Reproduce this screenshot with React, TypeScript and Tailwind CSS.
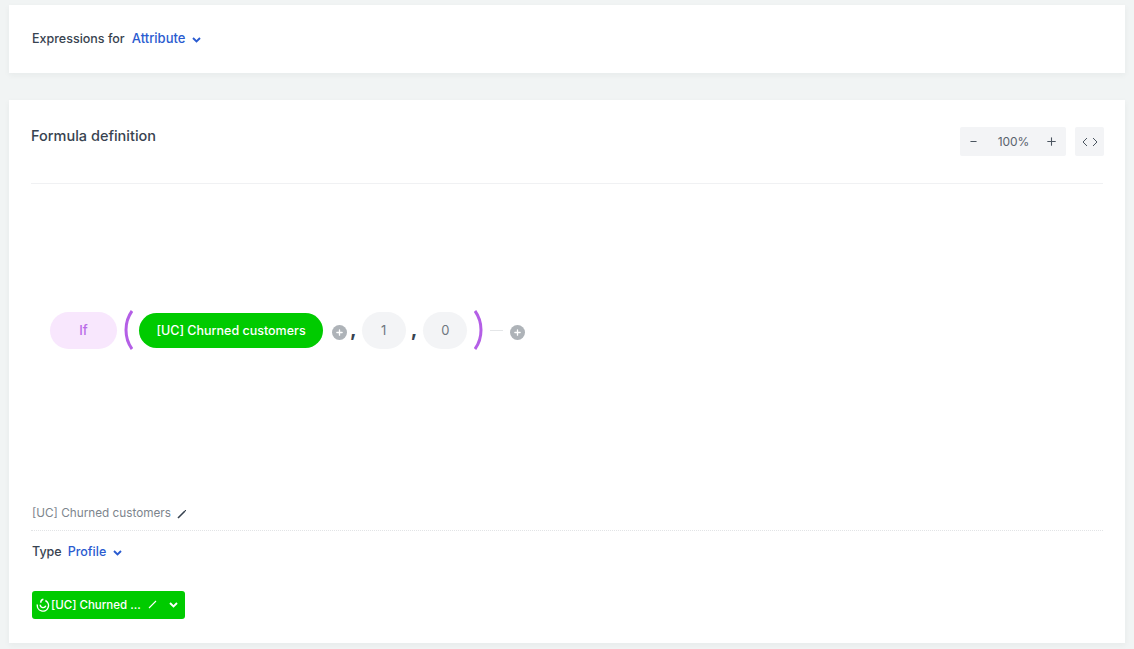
import React from 'react';
import { Minus, Plus } from 'lucide-react';

const font = "font-['Inter',sans-serif]";

function Chevron({ className }: { className?: string }) {
  return (
    <svg width="9" height="6" viewBox="0 0 9 6" fill="none" stroke="currentColor" strokeWidth="1.9" className={className}>
      <path d="M1 1l3.5 3.5L8 1" />
    </svg>
  );
}

function Dropdown({ label, small }: { label: string; small?: boolean }) {
  return (
    <span className={`flex items-center font-medium text-[#2a5bd0] ${small ? 'text-[12.5px]' : 'text-[13px]'}`}>
      {label}
      <Chevron className="ml-[7px] mt-[2px]" />
    </span>
  );
}

function AddButton() {
  return (
    <span className="flex h-[15px] w-[15px] items-center justify-center rounded-full bg-[#aeb3b8] text-white">
      <Plus className="h-[9px] w-[9px]" strokeWidth={3.5} />
    </span>
  );
}

function Bracket({ flip }: { flip?: boolean }) {
  return (
    <svg width="10" height="40" viewBox="0 0 10 40" className={flip ? 'rotate-180' : ''}>
      <path d="M9 1 C1 12 1 28 9 39" fill="none" stroke="#b45fe6" strokeWidth="3" />
    </svg>
  );
}

function Comma() {
  return <span className="mt-[7px] w-[6px] text-[20px] font-bold leading-none text-[#384350]">,</span>;
}

function Arg({ value }: { value: string }) {
  return (
    <span className="flex h-[37px] w-[44px] items-center justify-center rounded-full bg-[#f3f4f6] pt-[2px] text-[13px] text-[#6f7780]">
      {value}
    </span>
  );
}

export default function App() {
  return (
    <div className={`${font} h-[649px] w-[1134px] overflow-hidden bg-[#f1f4f4] px-[9px] pt-[5px]`}>
      <section className="flex h-[68px] items-center bg-white pl-[23px] shadow-[0_2px_6px_rgba(30,50,60,0.05)]">
        <span className="mr-[7px] text-[12.5px] font-medium text-[#384350]">Expressions for</span>
        <Dropdown label="Attribute" />
      </section>

      <section className="mt-[27px] flex h-[543px] flex-col bg-white px-[22px] shadow-[0_2px_6px_rgba(30,50,60,0.05)]">
        <header className="flex h-[84px] items-start justify-between border-b border-[#f0f1f3] pt-[27px]">
          <h2 className="mt-[-1px] text-[14.5px] font-medium leading-[20px] text-[#384350]">Formula definition</h2>
          <div className="mr-[-1px] flex gap-[9px] text-[#4b5560]">
            <div className="flex h-[29px] w-[106px] items-center justify-between rounded-[2px] bg-[#f3f4f6] pl-[9px] pr-[8px]">
              <Minus className="h-[9px] w-[9px]" strokeWidth={3} />
              <span className="ml-[4px] text-[12px] tracking-[-0.1px] text-[#5a636d]">100%</span>
              <Plus className="h-[13px] w-[13px]" strokeWidth={2} />
            </div>
            <div className="flex h-[29px] w-[29px] items-center justify-center rounded-[2px] bg-[#f3f4f6]">
              <svg width="16" height="10" viewBox="0 0 16 10" fill="none" stroke="#4b5560" strokeWidth="1">
                <path d="M5 1 1 5l4 4M11 1l4 4-4 4" />
              </svg>
            </div>
          </div>
        </header>

        <div className="flex h-[300px] items-center pb-[8px] pl-[19px]">
          <span className="flex h-[37px] w-[67px] items-center justify-center rounded-full bg-[#f8e7fd] pt-[2px] text-[13px] font-medium text-[#b96ce8]">
            If
          </span>
          <span className="ml-[6px]"><Bracket /></span>
          <span className="ml-[6px] flex h-[35px] w-[184px] items-center justify-center rounded-full bg-[#00cb00] pt-[2px] text-[12.5px] font-medium text-white">
            [UC] Churned customers
          </span>
          <span className="ml-[9px] mt-[5px]"><AddButton /></span>
          <span className="ml-[3px]"><Comma /></span>
          <span className="ml-[5px]"><Arg value="1" /></span>
          <span className="ml-[5px]"><Comma /></span>
          <span className="ml-[6px]"><Arg value="0" /></span>
          <span className="ml-[7px]"><Bracket flip /></span>
          <span className="ml-[6px] h-px w-[13px] bg-[#e4e6e8]" />
          <span className="ml-[7px] mt-[5px]"><AddButton /></span>
        </div>

        <div className="flex h-[47px] items-center border-b border-dotted border-[#e2e4e6] pl-px pt-[14px] text-[11.75px] text-[#7d858d]">
          [UC] Churned customers
          <svg width="10" height="10" viewBox="0 0 10 10" fill="none" stroke="#384350" className="ml-[6px]">
            <path d="M1 9 8 2" strokeWidth="1.6" />
            <path d="M8 2 9 1" strokeWidth="1" />
          </svg>
        </div>

        <div className="mt-[12px] flex items-center pl-px">
          <span className="mr-[6px] text-[12.5px] font-medium text-[#384350]">Type</span>
          <Dropdown label="Profile" small />
        </div>

        <div className="ml-px mt-[29px] flex h-[28px] w-[153px] items-center rounded-[3px] bg-[#00cb00] pl-[4px] text-white">
          <svg width="14" height="14" viewBox="0 0 14 14" fill="none" stroke="white" strokeWidth="1.4">
            <path d="M1.4 6.5a5.6 5.6 0 1 0 8-4" />
            <path d="M4.2 6.8a2.9 2.9 0 0 0 5.6 1" />
            <path d="M7.4 1.2a3.4 3.4 0 0 0-2.6 3.6" />
          </svg>
          <span className="ml-px w-[94px] whitespace-nowrap pt-[2px] text-[11.5px] font-medium">[UC] Churned ...</span>
          <svg width="9" height="9" viewBox="0 0 9 9" stroke="white" strokeWidth="1.1" className="ml-[3px]">
            <path d="M1 8 8 1" />
          </svg>
          <Chevron className="ml-[12px]" />
        </div>
      </section>
    </div>
  );
}
